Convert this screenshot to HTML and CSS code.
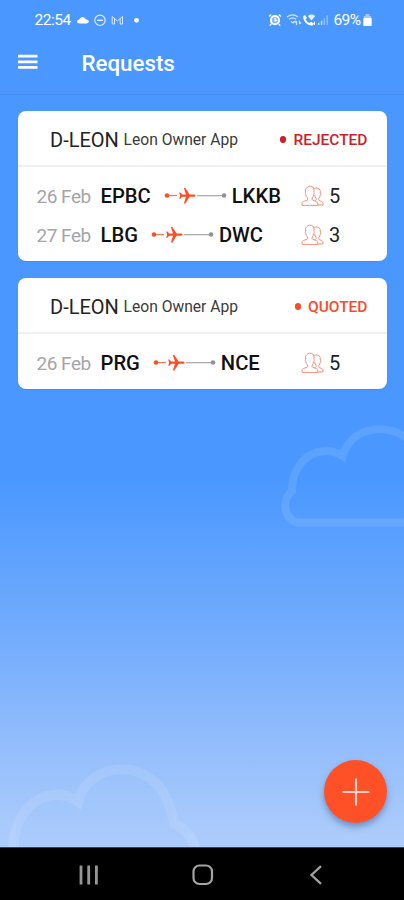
FILE: index.html
```html
<!DOCTYPE html>
<html lang="en">
<head>
<meta charset="utf-8">
<title>Requests</title>
<link rel="stylesheet" href="styles.css">
</head>
<body>
<svg class="defs" width="0" height="0" aria-hidden="true">
  <symbol id="route" viewBox="0 0 63 20">
    <circle cx="3" cy="9.5" r="2.3" fill="#ff4d26"/>
    <path d="M5 9.5H13" stroke="#ff7657" stroke-width="1.2"/>
    <path d="M33 9.7H59" stroke="#a5a5a5" stroke-width="1.2"/>
    <circle cx="60" cy="9.5" r="2.3" fill="#929292"/>
    <path d="M31.5 9.7C31.5 8.9 30.7 8.6 29.6 8.6H25.6L21.4 2H19.9L22 8.6H18.1L16.4 6.6H15.2L16.1 9.7L15.2 12.8H16.4L18.1 10.8H22L19.9 17.4H21.4L25.6 10.8H29.6C30.7 10.8 31.5 10.5 31.5 9.7Z" fill="#ff4d26"/>
  </symbol>
  <symbol id="people" viewBox="0 0 23 22">
    <g fill="none" stroke="#f58a72" stroke-width=".95" stroke-linejoin="round" stroke-linecap="round">
      <path d="M1 20V18.3Q1 17 2.4 16.6L6 15.2Q7.2 14.6 6.4 12.8Q4.8 11.6 4.7 9.3Q3.9 8.5 4.6 7.2Q3.9 3.1 6.4 2.2Q8.2.3 10.8 1.5Q13.4 2 13 5.4V7.4Q13.7 8.6 12.7 9.4Q12.5 11.8 11.3 12.8Q10.5 14.6 11.8 15.2L15.3 16.6Q16.7 17.1 16.8 18.5V20Z"/>
      <path d="M13.6 3.2Q16.5 2.1 18.3 4.1Q19.7 5.2 19.3 8.2Q20.3 9.1 19.2 10.3Q19 12.3 17.8 13.4Q17.2 15 18.5 15.6L20.8 16.6Q22 17.1 22 18.5V20H16.8M13.7 10.3Q14 12.4 15.2 13.4Q15.8 14.6 14.7 15.4"/>
    </g>
  </symbol>
</svg>
<div class="screen">
  <header class="top">
    <div class="status">
      <span class="clock">22:54</span>
      <svg class="left-icons" width="66" height="14" viewBox="0 0 66 14">
        <path d="M3.5 10.5Q1 10.5 1 8.7Q1.1 6.9 3 6.8Q4 4 6.5 4Q9.1 4 9.9 6.6Q12.8 6.8 12.8 8.8Q12.6 10.5 10.5 10.5Z" fill="#fff"/>
        <circle cx="24" cy="7.3" r="5.2" fill="none" stroke="#e5f0ff" stroke-width="1.1"/>
        <path d="M21 7.3H27" stroke="#e5f0ff" stroke-width="1.4"/>
        <path d="M36.2 11V3.5L41.3 8L46.5 3.5V11M38.5 11V5.5M44.2 11V5.5M36.5 11H38.5M44.2 11H46.5" fill="none" stroke="#dcebff" stroke-width="1"/>
        <circle cx="60.5" cy="7.3" r="2.4" fill="#fff"/>
      </svg>
      <svg class="right-icons" width="64" height="14" viewBox="0 0 64 14">
        <circle cx="7" cy="7.2" r="4.1" fill="#fff" fill-opacity=".3" stroke="#fff" stroke-width="2"/>
        <path d="M1.2 3.5L3.2 1.5M12.8 3.5L10.8 1.5M3.2 11L1.8 12.7M10.8 11L12.2 12.7M7 4.8V7.5H9" fill="none" stroke="#fff" stroke-width="1.3"/>
        <path d="M19 4Q24.5-.2 30 4M21 6.3Q24.5 3.4 28 6.3M23 8.4L25 10L27 8M28.5 12V8M28.5 8L27 9.5M31.5 7.5V11M31.5 11L33 9.5" fill="none" stroke="#fff" stroke-opacity=".75" stroke-width="1.2"/>
        <path d="M35.2 3L37.3 2L38.8 5L37.6 6.4Q38.8 9 41.6 10L43 8.8L46 10.6L44.6 12.4Q40.5 13 37.3 9.6Q34.7 6.5 35.2 3Z" fill="#fff"/>
        <path d="M39.8 3Q43.5.2 47.2 3L43.5 7.5Z" fill="#fff" fill-opacity=".85"/>
        <path d="M46.5 8.5V12" stroke="#fff" stroke-width="1"/>
        <path d="M50.8 12V9.8M53.6 12V7.8" stroke="#bad8ff" stroke-width="1.5"/>
        <path d="M56.3 12V5.3M59.2 12V2.3" stroke="#8abcff" stroke-width="1.5"/>
      </svg>
      <span class="charge">69%</span>
      <svg class="battery" width="9" height="13" viewBox="0 0 9 13"><path d="M2.5 0H6.5V2H2.5Z" fill="#a3cbff"/><path d="M.8 2H8.2V4H.8Z" fill="#a3cbff"/><rect x=".3" y="4" width="8.4" height="8" rx=".8" fill="#fff"/></svg>
    </div>
    <div class="appbar">
      <svg class="menu" width="20" height="16" viewBox="0 0 20 16"><path d="M0 2.2H19.5M0 7.8H19.5M0 13.4H19.5" stroke="#fff" stroke-width="2.8"/></svg>
      <h1>Requests</h1>
    </div>
  </header>

  <main class="content">
    <svg class="cloud cloud-right" width="130" height="110" viewBox="274 420 130 110"><path d="M412 522.5H300C285 522.5 280 501 292 491C291 461 319 441 343 456C351 426 387 422 410 440"/></svg>
    <svg class="cloud cloud-left" width="210" height="90" viewBox="0 757 210 90"><path d="M14 852C10 812 46 780 78 802C88 760 151 757 168 802C171 810 173 816 174 824C186 828 193 838 196 852"/></svg>

    <article class="card">
      <div class="card-head"><span class="tail">D-LEON</span><span class="owner">Leon Owner App</span><span class="state rejected">REJECTED</span></div>
      <div class="legs">
        <div class="leg"><span class="date">26 Feb</span><div class="trip"><b>EPBC</b><svg class="route"><use href="#route"/></svg><b>LKKB</b></div><svg class="people"><use href="#people"/></svg><span class="pax">5</span></div>
        <div class="leg"><span class="date">27 Feb</span><div class="trip"><b>LBG</b><svg class="route"><use href="#route"/></svg><b>DWC</b></div><svg class="people"><use href="#people"/></svg><span class="pax">3</span></div>
      </div>
    </article>
    <article class="card">
      <div class="card-head"><span class="tail">D-LEON</span><span class="owner">Leon Owner App</span><span class="state quoted">QUOTED</span></div>
      <div class="legs single">
        <div class="leg"><span class="date">26 Feb</span><div class="trip"><b>PRG</b><svg class="route"><use href="#route"/></svg><b>NCE</b></div><svg class="people"><use href="#people"/></svg><span class="pax">5</span></div>
      </div>
    </article>
    <button class="add" aria-label="Add"><svg width="28" height="28" viewBox="0 0 28 28"><path d="M14 .5V27.5M.5 14H27.5" stroke="#ffd0c4" stroke-width="2.2"/></svg></button>
  </main>

  <nav class="nav">
    <svg width="20" height="20" viewBox="0 0 20 20"><path d="M2 .5V19.5M9.7 .5V19.5M17.4 .5V19.5" stroke="#969696" stroke-width="2.8"/></svg>
    <svg width="22" height="22" viewBox="0 0 22 22"><rect x="1.5" y="1.5" width="18.5" height="18.5" rx="6" fill="none" stroke="#a4a4a4" stroke-width="2.2"/></svg>
    <svg width="14" height="20" viewBox="0 0 14 20"><path d="M12 1.2L2.5 10L12 18.8" fill="none" stroke="#a0a0a0" stroke-width="2.3"/></svg>
  </nav>
</div>
</body>
</html>
```

FILE: styles.css
```css
* { box-sizing: border-box; }
body { margin: 0; font-family: Roboto, "Liberation Sans", sans-serif; }
svg { display: block; flex: none; }
.defs { position: absolute; }
.screen {
  width: 404px;
  height: 900px;
  display: flex;
  flex-direction: column;
  overflow: hidden;
  background: linear-gradient(#4a98ff 0, #4a98ff 480px, #77aefd 650px, #94befc 750px, #afcdfb 847px);
}
.top { height: 95px; border-bottom: 1px solid #438eed; color: #fff; }
.status { height: 40px; display: flex; align-items: center; padding-left: 34.5px; font-size: 15.5px; }
.clock { width: 41.5px; letter-spacing: -0.5px; }
.right-icons { margin-left: 126px; }
.charge { margin-left: 1.5px; width: 29px; letter-spacing: -0.6px; }
.appbar { height: 46px; display: flex; align-items: center; padding-left: 18px; gap: 43.5px; }
.menu { margin-bottom: 2px; }
h1 { margin: 0; font-size: 22.3px; font-weight: 500; line-height: 46px; }
.content { position: relative; flex: 1; padding: 16px 17px 0 18px; display: flex; flex-direction: column; gap: 17px; }
.cloud { position: absolute; fill: none; stroke: #fff; stroke-opacity: .1; stroke-width: 8; }
.cloud-right { right: 0; top: 325px; }
.cloud-left { left: 0; bottom: 0; stroke-width: 10; fill: #9bc4ff; fill-opacity: .16; }
.card { position: relative; background: #fff; border-radius: 8px; box-shadow: 0 1px 1px #3784e880; }
.card-head { height: 56px; display: flex; align-items: center; padding: 3px 19.5px 0 32px; border-bottom: 2px solid #f0f0f0; }
.tail { width: 73.5px; font-size: 20px; font-weight: 400; letter-spacing: 0; color: #242424; white-space: nowrap; }
.owner { font-size: 15.65px; color: #3b3b3b; white-space: nowrap; }
.state { margin-left: auto; display: flex; align-items: center; gap: 7px; font-size: 15.5px; font-weight: 500; }
.state::before { content: ""; width: 6.5px; height: 6.5px; flex: none; border-radius: 50%; background: currentColor; }
.rejected { color: #ce2028; }
.quoted { color: #fb4a2a; }
.legs { padding: 9.5px 0 5px 18.5px; height: 94px; }
.legs.single { height: 55px; padding-top: 9.5px; }
.leg { height: 39px; display: flex; align-items: center; }
.date { width: 64px; font-size: 19px; letter-spacing: -0.5px; color: #a5a5a5; white-space: nowrap; }
.trip { width: 200px; display: flex; align-items: center; }
.trip b { font-size: 20.2px; font-weight: 500; color: #111; }
.route { width: 63px; height: 20px; margin: 0 5px 1px 13px; }
.people { width: 23px; height: 22px; margin-bottom: 1px; }
.pax { margin-left: 5.5px; font-size: 20px; color: #222; }
.add { position: absolute; left: 324px; bottom: 24px; width: 63px; height: 63px; padding: 0; border: 0; border-radius: 50%; background: #ff5028; display: grid; place-items: center; box-shadow: 0 4px 6px #4b6b9a99; }
.nav { height: 53px; background: #000; border-top: 1px solid #354657; display: flex; align-items: center; padding: 1px 0 0 79px; }
.nav svg:nth-child(2) { margin-left: 93px; }
.nav svg:nth-child(3) { margin-left: 95px; }
```
